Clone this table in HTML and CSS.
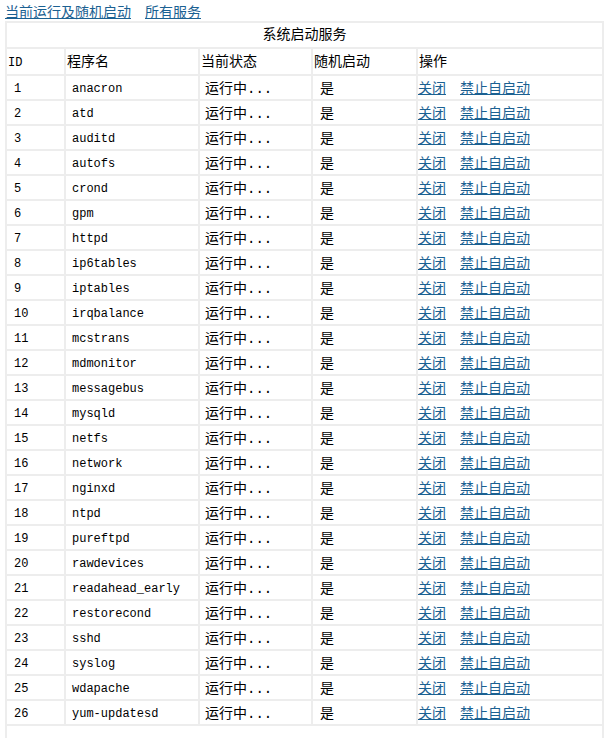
FILE: index.html
```html
<!DOCTYPE html>
<html lang="zh-CN">
<head>
<meta charset="utf-8">
<title>系统启动服务</title>
<link rel="stylesheet" href="styles.css">
</head>
<body>
<div class="topnav"><a href="#">当前运行及随机启动</a><a href="#" class="second">所有服务</a></div>
<table class="svc">
<colgroup><col class="c1"><col class="c2"><col class="c3"><col class="c4"><col class="c5"></colgroup>
<tr class="cap"><td colspan="5">系统启动服务</td></tr>
<tr class="head"><td class="mono">ID</td><td>程序名</td><td>当前状态</td><td>随机启动</td><td>操作</td></tr>
<tr><td class="id">1</td><td class="name">anacron</td><td class="st">运行中...</td><td class="ab">是</td><td class="op"><a href="#">关闭</a><a href="#" class="second">禁止自启动</a></td></tr>
<tr><td class="id">2</td><td class="name">atd</td><td class="st">运行中...</td><td class="ab">是</td><td class="op"><a href="#">关闭</a><a href="#" class="second">禁止自启动</a></td></tr>
<tr><td class="id">3</td><td class="name">auditd</td><td class="st">运行中...</td><td class="ab">是</td><td class="op"><a href="#">关闭</a><a href="#" class="second">禁止自启动</a></td></tr>
<tr><td class="id">4</td><td class="name">autofs</td><td class="st">运行中...</td><td class="ab">是</td><td class="op"><a href="#">关闭</a><a href="#" class="second">禁止自启动</a></td></tr>
<tr><td class="id">5</td><td class="name">crond</td><td class="st">运行中...</td><td class="ab">是</td><td class="op"><a href="#">关闭</a><a href="#" class="second">禁止自启动</a></td></tr>
<tr><td class="id">6</td><td class="name">gpm</td><td class="st">运行中...</td><td class="ab">是</td><td class="op"><a href="#">关闭</a><a href="#" class="second">禁止自启动</a></td></tr>
<tr><td class="id">7</td><td class="name">httpd</td><td class="st">运行中...</td><td class="ab">是</td><td class="op"><a href="#">关闭</a><a href="#" class="second">禁止自启动</a></td></tr>
<tr><td class="id">8</td><td class="name">ip6tables</td><td class="st">运行中...</td><td class="ab">是</td><td class="op"><a href="#">关闭</a><a href="#" class="second">禁止自启动</a></td></tr>
<tr><td class="id">9</td><td class="name">iptables</td><td class="st">运行中...</td><td class="ab">是</td><td class="op"><a href="#">关闭</a><a href="#" class="second">禁止自启动</a></td></tr>
<tr><td class="id">10</td><td class="name">irqbalance</td><td class="st">运行中...</td><td class="ab">是</td><td class="op"><a href="#">关闭</a><a href="#" class="second">禁止自启动</a></td></tr>
<tr><td class="id">11</td><td class="name">mcstrans</td><td class="st">运行中...</td><td class="ab">是</td><td class="op"><a href="#">关闭</a><a href="#" class="second">禁止自启动</a></td></tr>
<tr><td class="id">12</td><td class="name">mdmonitor</td><td class="st">运行中...</td><td class="ab">是</td><td class="op"><a href="#">关闭</a><a href="#" class="second">禁止自启动</a></td></tr>
<tr><td class="id">13</td><td class="name">messagebus</td><td class="st">运行中...</td><td class="ab">是</td><td class="op"><a href="#">关闭</a><a href="#" class="second">禁止自启动</a></td></tr>
<tr><td class="id">14</td><td class="name">mysqld</td><td class="st">运行中...</td><td class="ab">是</td><td class="op"><a href="#">关闭</a><a href="#" class="second">禁止自启动</a></td></tr>
<tr><td class="id">15</td><td class="name">netfs</td><td class="st">运行中...</td><td class="ab">是</td><td class="op"><a href="#">关闭</a><a href="#" class="second">禁止自启动</a></td></tr>
<tr><td class="id">16</td><td class="name">network</td><td class="st">运行中...</td><td class="ab">是</td><td class="op"><a href="#">关闭</a><a href="#" class="second">禁止自启动</a></td></tr>
<tr><td class="id">17</td><td class="name">nginxd</td><td class="st">运行中...</td><td class="ab">是</td><td class="op"><a href="#">关闭</a><a href="#" class="second">禁止自启动</a></td></tr>
<tr><td class="id">18</td><td class="name">ntpd</td><td class="st">运行中...</td><td class="ab">是</td><td class="op"><a href="#">关闭</a><a href="#" class="second">禁止自启动</a></td></tr>
<tr><td class="id">19</td><td class="name">pureftpd</td><td class="st">运行中...</td><td class="ab">是</td><td class="op"><a href="#">关闭</a><a href="#" class="second">禁止自启动</a></td></tr>
<tr><td class="id">20</td><td class="name">rawdevices</td><td class="st">运行中...</td><td class="ab">是</td><td class="op"><a href="#">关闭</a><a href="#" class="second">禁止自启动</a></td></tr>
<tr><td class="id">21</td><td class="name">readahead_early</td><td class="st">运行中...</td><td class="ab">是</td><td class="op"><a href="#">关闭</a><a href="#" class="second">禁止自启动</a></td></tr>
<tr><td class="id">22</td><td class="name">restorecond</td><td class="st">运行中...</td><td class="ab">是</td><td class="op"><a href="#">关闭</a><a href="#" class="second">禁止自启动</a></td></tr>
<tr><td class="id">23</td><td class="name">sshd</td><td class="st">运行中...</td><td class="ab">是</td><td class="op"><a href="#">关闭</a><a href="#" class="second">禁止自启动</a></td></tr>
<tr><td class="id">24</td><td class="name">syslog</td><td class="st">运行中...</td><td class="ab">是</td><td class="op"><a href="#">关闭</a><a href="#" class="second">禁止自启动</a></td></tr>
<tr><td class="id">25</td><td class="name">wdapache</td><td class="st">运行中...</td><td class="ab">是</td><td class="op"><a href="#">关闭</a><a href="#" class="second">禁止自启动</a></td></tr>
<tr><td class="id">26</td><td class="name">yum-updatesd</td><td class="st">运行中...</td><td class="ab">是</td><td class="op"><a href="#">关闭</a><a href="#" class="second">禁止自启动</a></td></tr>
<tr class="empty"><td colspan="5"></td></tr>
</table>
</body>
</html>
```
FILE: styles.css
```css
html, body {
  margin: 0;
  padding: 0;
  background: #ffffff;
}
body {
  padding: 2px 5px 0 5px;
  font-family: "Noto Sans CJK SC", "Liberation Sans", sans-serif;
  font-size: 14px;
  color: #000;
}
a {
  color: #1b6192;
  text-decoration: underline;
}
.topnav {
  height: 19px;
  line-height: 18px;
  white-space: nowrap;
}
.second {
  margin-left: 14px;
}
.svc {
  table-layout: fixed;
  width: 599px;
  border-collapse: separate;
  border-spacing: 2px;
  background: #ededed;
}
.c1 { width: 57px; }
.c2 { width: 132px; }
.c3 { width: 111px; }
.c4 { width: 103px; }
.c5 { width: 184px; }
.svc td {
  background: #fff;
  padding: 0;
  height: 21px;
  line-height: 16px;
  vertical-align: middle;
  white-space: nowrap;
  overflow: hidden;
}
.svc .cap td {
  height: 19px;
  text-align: center;
  padding-bottom: 5px;
}
.svc .head td {
  height: 21px;
  padding-left: 1px;
  padding-bottom: 4px;
}
.svc .head .mono {
  font-family: "Liberation Mono", monospace;
  font-size: 12px;
  height: 23px;
  padding-bottom: 0;
  padding-top: 2px;
}
.svc .id,
.svc .name {
  font-family: "Liberation Mono", monospace;
  font-size: 12px;
  padding-left: 7px;
  padding-top: 2px;
}
.svc .name {
  padding-left: 6px;
}
.svc .st {
  font-family: "Liberation Mono", "Noto Sans CJK SC", monospace;
  padding-left: 5px;
  padding-top: 2px;
}
.svc .ab {
  padding-left: 7px;
  padding-bottom: 2px;
}
.svc .op {
  padding-left: 0;
  padding-bottom: 2px;
}
.svc .empty td {
  height: 23px;
  padding: 0;
}
```
